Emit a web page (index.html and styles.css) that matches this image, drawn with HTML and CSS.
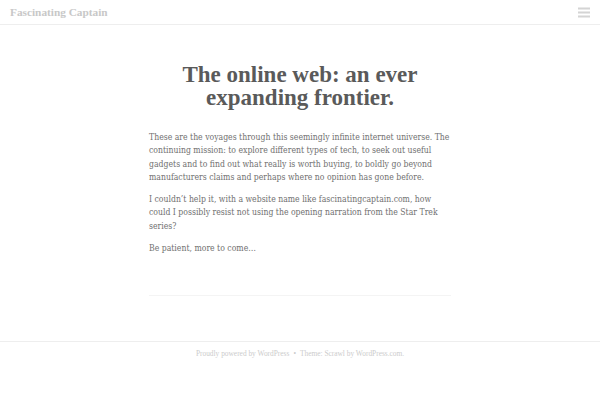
FILE: index.html
```html
<!DOCTYPE html>
<html>
<head>
<meta charset="utf-8">
<link rel="stylesheet" href="styles.css">
</head>
<body>
<header class="site-header">
  <div class="site-title">Fascinating Captain</div>
  <div class="menu-toggle">
    <svg width="12" height="11" viewBox="0 0 12 11"><rect x="0" y="0.5" width="12" height="2" fill="#d4d4d4"/><rect x="0" y="4.5" width="12" height="2" fill="#d4d4d4"/><rect x="0" y="8.5" width="12" height="2" fill="#d4d4d4"/></svg>
  </div>
</header>
<main class="content">
  <article class="entry">
    <h1 class="entry-title">The online web: an ever expanding frontier.</h1>
    <div class="entry-content">
      <p>These are the voyages through this seemingly infinite internet universe. The continuing mission: to explore different types of tech, to seek out useful gadgets and to find out what really is worth buying, to boldly go beyond manufacturers claims and perhaps where no opinion has gone before.</p>
      <p>I couldn’t help it, with a website name like fascinatingcaptain.com, how could I possibly resist not using the opening narration from the Star Trek series?</p>
      <p>Be patient, more to come…</p>
    </div>
  </article>
  <hr class="sep">
</main>
<footer class="site-footer">
  <span>Proudly powered by WordPress</span><span class="dot">•</span><span>Theme: Scrawl by WordPress.com.</span>
</footer>
</body>
</html>
```
FILE: styles.css
```css
html, body { margin: 0; padding: 0; background: #fff; }
body { font-family: "DejaVu Serif", serif; color: #666; }
.site-header {
  height: 24px;
  border-bottom: 1px solid #eee;
  display: flex;
  align-items: center;
  justify-content: space-between;
  padding: 0 10px;
}
.site-title {
  font-family: "Liberation Serif", serif;
  font-weight: bold;
  font-size: 11.3px;
  color: #c8c8c8;
}
.menu-toggle { display: flex; align-items: center; }
.content {
  width: 302px;
  margin: 0 auto;
  padding-top: 38px;
}
.entry-title {
  font-family: "Liberation Serif", serif;
  font-weight: bold;
  font-size: 23px;
  line-height: 23px;
  text-align: center;
  color: #5a5a5a;
  margin: 0 0 22px;
}
.entry-content {
  font-family: "DejaVu Serif Condensed", "DejaVu Serif", serif;
  font-stretch: condensed;
  font-size: 8.6px;
  line-height: 13.3px;
  color: #707070;
}
.entry-content p { margin: 0 0 9px; }
.sep {
  border: 0;
  border-top: 1px solid #f4f4f4;
  margin: 40px 0 0;
}
.site-footer {
  margin-top: 45px;
  border-top: 1px solid #eee;
  text-align: center;
  font-family: "Liberation Serif", serif;
  font-size: 7.4px;
  color: #ccc;
  padding-top: 7px;
}
.dot { margin: 0 4px; }
```
